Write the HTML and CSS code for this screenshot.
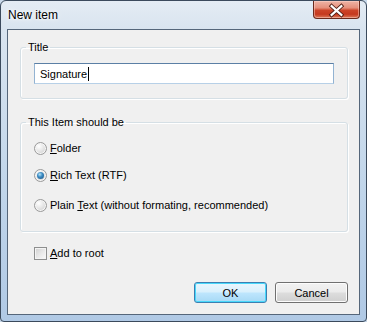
FILE: index.html
```html
<!DOCTYPE html>
<html lang="en">
<head>
    <meta charset="UTF-8">
    <meta name="viewport" content="width=device-width, initial-scale=1.0">
    <title>New item</title>
    <link rel="stylesheet" href="styles.css">
</head>
<body>
    <div class="window">
        <div class="titlebar">
            <span class="caption">New item</span>
            <button class="close" type="button" aria-label="Close">
                <svg width="47" height="18" viewBox="0 0 47 18">
                    <path d="M19 5 L29 14 M29 5 L19 14" stroke="#4a1a10" stroke-width="4" stroke-linecap="square"/>
                    <path d="M19 5 L29 14 M29 5 L19 14" stroke="#fff" stroke-width="2.2" stroke-linecap="square"/>
                </svg>
            </button>
        </div>

        <div class="client">
            <fieldset class="group title-group">
                <legend>Title</legend>
                <div class="textbox"><span>Signature</span><span class="caret"></span></div>
            </fieldset>

            <fieldset class="group type-group">
                <legend>This Item should be</legend>
                <div class="option first"><span class="radio"></span><span><u>F</u>older</span></div>
                <div class="option"><span class="radio checked"></span><span><u>R</u>ich Text (RTF)</span></div>
                <div class="option last"><span class="radio"></span><span>Plain <u>T</u>ext (without formating, recommended)</span></div>
            </fieldset>

            <div class="option check-row"><span class="checkbox"></span><span><u>A</u>dd to root</span></div>

            <div class="buttons">
                <button type="button" class="button default">OK</button>
                <button type="button" class="button">Cancel</button>
            </div>
        </div>
    </div>
</body>
</html>
```

FILE: styles.css
```css
body {
    margin: 0;
    font-family: "Liberation Sans", Arial, sans-serif;
    font-size: 11px;
    color: #000;
    background: #c9d9ea;
}
.window {
    box-sizing: border-box;
    width: 367px;
    height: 322px;
    padding: 0 6px 6px 6px;
    border: 1px solid #3b4a5c;
    border-radius: 6px 6px 4px 4px;
    background: linear-gradient(180deg, #e4ecf4 0, #d9e4ef 28px, #c0d5ea 60%, #b0c9e5 100%);
}
.titlebar {
    height: 28px;
    display: flex;
    justify-content: space-between;
    align-items: flex-start;
}
.caption {
    padding: 7px 0 0 1px;
    font-size: 12px;
    line-height: 15px;
    text-shadow: 0 0 6px #fff, 0 0 3px #fff;
}
.close {
    width: 47px;
    height: 18px;
    padding: 0;
    margin: 0;
    border: 1px solid #6b2a1c;
    border-top: none;
    border-radius: 0 0 4px 4px;
    box-sizing: border-box;
    background: linear-gradient(180deg, #eeb4a6 0%, #e5907c 40%, #cc4428 55%, #c5391e 78%, #dc7a5a 100%);
    box-shadow: inset 0 0 0 1px rgba(255, 220, 210, 0.45);
    display: flex;
    align-items: center;
    justify-content: center;
}
.close svg {
    display: block;
    margin-left: -1px;
}
.client {
    box-sizing: border-box;
    height: 286px;
    border: 1px solid #55667a;
    background: #f0f0f0;
    padding: 10px 11px 0 12px;
}
.group {
    margin: 0;
    padding: 0 13px;
    border: 1px solid #d5dfe5;
    border-radius: 3px;
    box-shadow: inset 1px 1px 0 #fff, 1px 1px 0 #fff;
}
.group legend {
    margin-left: -8px;
    padding: 0 2px;
    line-height: 15px;
}
.title-group {
    padding-top: 8px;
    padding-bottom: 14px;
}
.type-group {
    margin-top: 16px;
    padding-top: 11px;
    padding-bottom: 18px;
}
.textbox {
    box-sizing: border-box;
    height: 21px;
    padding: 1px 4px 0 5px;
    line-height: 15px;
    background: #fff;
    border: 1px solid;
    border-color: #5b7fa5 #93b3d2 #b7d0e7 #93b3d2;
    display: flex;
    align-items: center;
}
.caret {
    display: inline-block;
    width: 1px;
    height: 14px;
    background: #000;
    margin-left: 1px;
}
.option {
    display: flex;
    align-items: center;
    height: 15px;
    line-height: 15px;
    margin-top: 12px;
}
.option.first {
    margin-top: 0;
}
.option.last {
    margin-top: 15px;
}
.radio {
    position: relative;
    box-sizing: border-box;
    width: 13px;
    height: 13px;
    margin-right: 3px;
    border-radius: 50%;
    border: 1px solid #9a9a9a;
    background: radial-gradient(circle at 35% 30%, #ffffff 0, #e6e6e6 45%, #c9c9c9 100%);
    box-shadow: inset 0 0 0 1px #f6f6f6;
}
.radio.checked::after {
    content: "";
    position: absolute;
    left: 2px;
    top: 2px;
    width: 7px;
    height: 7px;
    border-radius: 50%;
    background: radial-gradient(circle at 40% 35%, #b8e6f8 0, #3d8cc4 40%, #15507f 100%);
}
.check-row {
    margin: 14px 0 0 14px;
}
.checkbox {
    box-sizing: border-box;
    width: 13px;
    height: 13px;
    margin-right: 3px;
    border: 1px solid #8e8f8f;
    background: linear-gradient(135deg, #cfcfcf 0, #e8e8e8 50%, #fbfbfb 100%);
    box-shadow: inset 0 0 0 1px #f4f4f4;
}
.buttons {
    display: flex;
    justify-content: flex-end;
    gap: 8px;
    margin-top: 21px;
}
.button {
    width: 73px;
    height: 21px;
    padding: 0;
    font-family: inherit;
    font-size: 11px;
    color: #000;
    border: 1px solid #707070;
    border-radius: 3px;
    background: linear-gradient(180deg, #f2f2f2 0, #ebebeb 48%, #dddddd 52%, #cfcfcf 100%);
    box-shadow: inset 0 0 0 1px #fcfcfc;
}
.button.default {
    border-color: #3c7fb1;
    background: linear-gradient(180deg, #eaf6fd 0, #d9f0fc 48%, #bee6fd 52%, #a7d9f5 100%);
    box-shadow: inset 0 0 0 1px #48d8fb;
}
```
